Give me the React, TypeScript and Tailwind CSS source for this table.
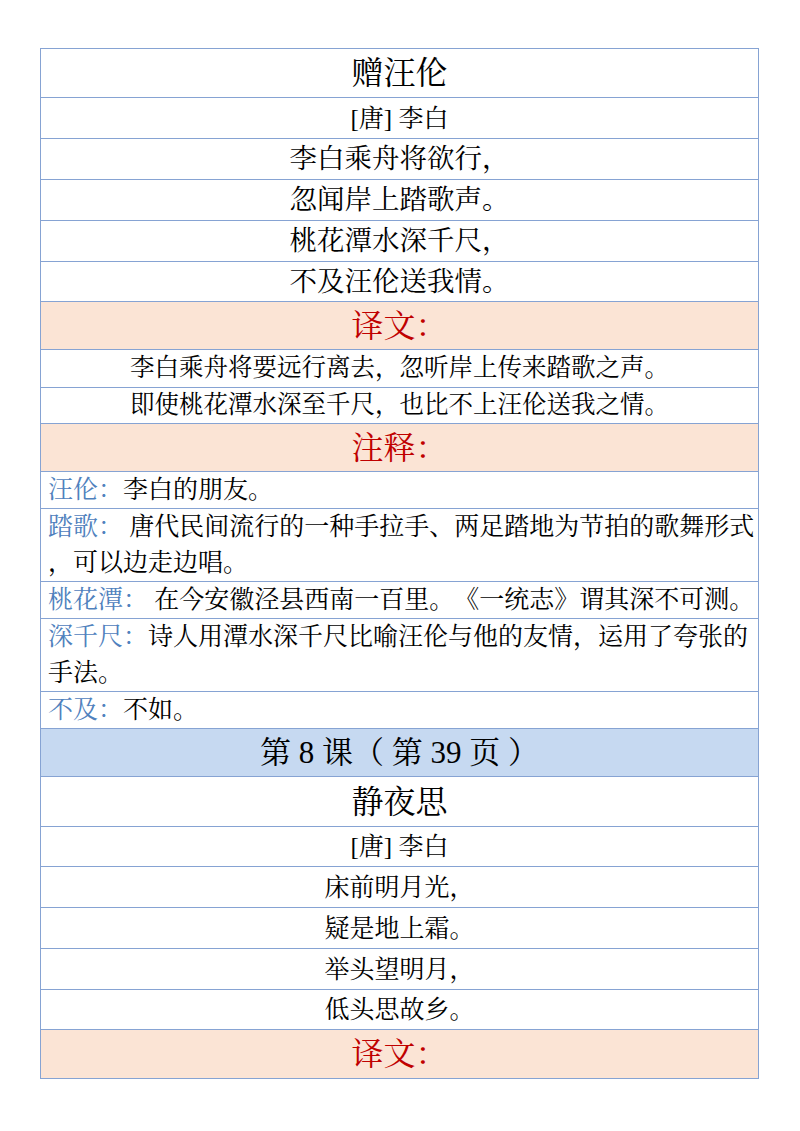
import React from "react";

const FONT = {
  fontFamily:
    '"Liberation Serif", "Noto Serif CJK SC", "Noto Sans CJK SC", serif',
};

function Center({
  h,
  children,
  bg = "",
  cls = "text-[25px]",
}: {
  h: string;
  children: React.ReactNode;
  bg?: string;
  cls?: string;
}) {
  return (
    <div
      className={`${h} ${bg} ${cls} flex items-center justify-center border-b border-[#86a3d3] leading-none whitespace-pre text-black`}
    >
      {children}
    </div>
  );
}

function Def({
  h,
  term,
  lines,
}: {
  h: string;
  term: string;
  lines: string[];
}) {
  return (
    <div
      className={`${h} flex flex-col justify-center border-b border-[#86a3d3] pl-[7px] text-[25px] leading-[36px] text-black`}
    >
      {lines.map((l, i) => (
        <div key={i} className="whitespace-pre">
          {i === 0 && <span className="text-[#4f81bd]">{term}</span>}
          {l}
        </div>
      ))}
    </div>
  );
}

export default function App() {
  return (
    <div
      className="min-h-[1131px] w-[800px] bg-white pt-[48px] [text-spacing-trim:space-all]"
      style={FONT}
    >
      <div className="ml-[40px] flex w-[719px] flex-col border-x border-t border-[#86a3d3]">
        <Center h="h-[49px]" cls="text-[32px]">赠汪伦</Center>
        <Center h="h-[41px]">[唐] 李白</Center>
        <Center h="h-[41px]" cls="text-[27.5px]">李白乘舟将欲行，</Center>
        <Center h="h-[41px]" cls="text-[27.5px]">忽闻岸上踏歌声。</Center>
        <Center h="h-[41px]" cls="text-[27.5px]">桃花潭水深千尺，</Center>
        <Center h="h-[40px]" cls="text-[27.5px]">不及汪伦送我情。</Center>
        <Center h="h-[48px]" bg="bg-[#fbe4d5]" cls="text-[32px] !text-[#c00000]">
          译文：
        </Center>
        <Center h="h-[38px]" cls="text-[24.5px]">
          李白乘舟将要远行离去，忽听岸上传来踏歌之声。
        </Center>
        <Center h="h-[36px]" cls="text-[24.5px]">
          即使桃花潭水深至千尺，也比不上汪伦送我之情。
        </Center>
        <Center h="h-[48px]" bg="bg-[#fbe4d5]" cls="text-[32px] !text-[#c00000]">
          注释：
        </Center>
        <Def h="h-[37px]" term="汪伦：" lines={["李白的朋友。"]} />
        <Def
          h="h-[73px]"
          term="踏歌："
          lines={[
            " 唐代民间流行的一种手拉手、两足踏地为节拍的歌舞形式",
            "，可以边走边唱。",
          ]}
        />
        <Def
          h="h-[37px]"
          term="桃花潭："
          lines={[" 在今安徽泾县西南一百里。《一统志》谓其深不可测。"]}
        />
        <Def
          h="h-[73px]"
          term="深千尺："
          lines={["诗人用潭水深千尺比喻汪伦与他的友情，运用了夸张的", "手法。"]}
        />
        <Def h="h-[37px]" term="不及：" lines={["不如。"]} />
        <Center h="h-[48px]" bg="bg-[#c6d9f1]" cls="text-[31px]">
          第 8 课（ 第 39 页 ）
        </Center>
        <Center h="h-[50px]" cls="text-[32px]">静夜思</Center>
        <Center h="h-[40px]">[唐] 李白</Center>
        <Center h="h-[41px]">床前明月光，</Center>
        <Center h="h-[41px]">疑是地上霜。</Center>
        <Center h="h-[41px]">举头望明月，</Center>
        <Center h="h-[40px]">低头思故乡。</Center>
        <Center h="h-[49px]" bg="bg-[#fbe4d5]" cls="text-[32px] !text-[#c00000]">
          译文：
        </Center>
      </div>
    </div>
  );
}
